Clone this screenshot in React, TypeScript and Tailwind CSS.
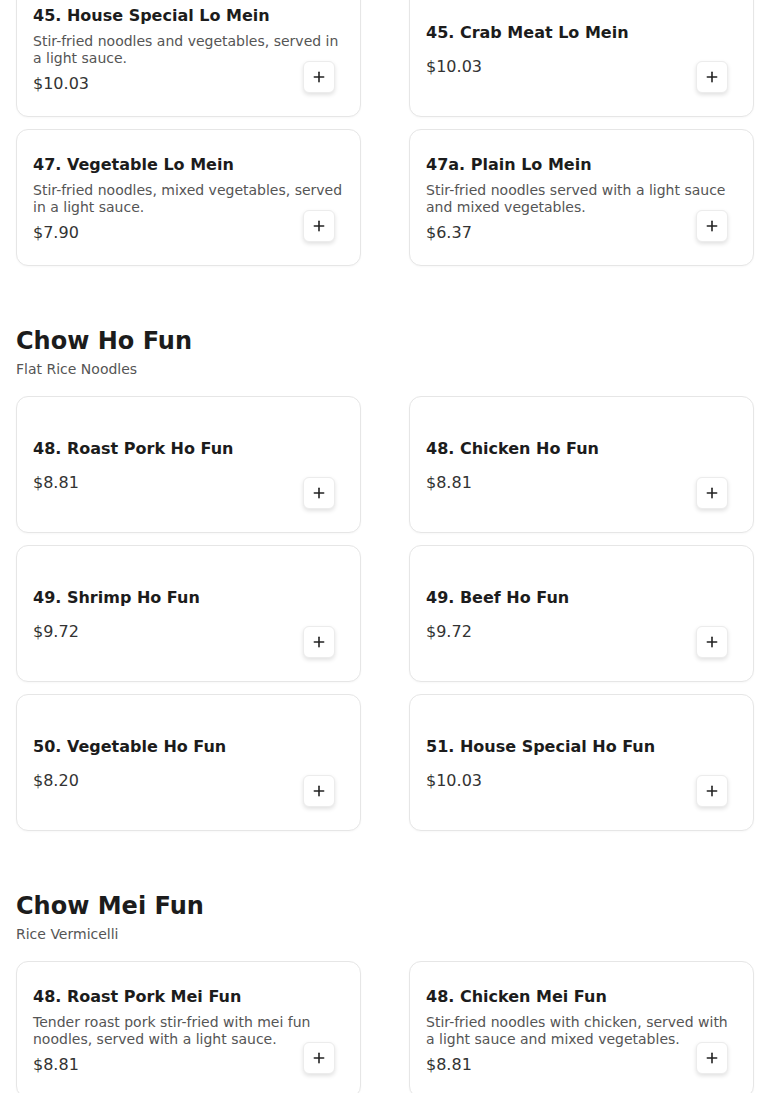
import { Plus } from 'lucide-react';

type Item = {
  name: string;
  description?: string;
  price: string;
};

type Section = {
  title?: string;
  subtitle?: string;
  items: Item[];
};

const SECTIONS: Section[] = [
  {
    items: [
      { name: '45. House Special Lo Mein', description: 'Stir-fried noodles and vegetables, served in a light sauce.', price: '$10.03' },
      { name: '45. Crab Meat Lo Mein', price: '$10.03' },
      { name: '47. Vegetable Lo Mein', description: 'Stir-fried noodles, mixed vegetables, served in a light sauce.', price: '$7.90' },
      { name: '47a. Plain Lo Mein', description: 'Stir-fried noodles served with a light sauce and mixed vegetables.', price: '$6.37' }
    ]
  },
  {
    title: 'Chow Ho Fun',
    subtitle: 'Flat Rice Noodles',
    items: [
      { name: '48. Roast Pork Ho Fun', price: '$8.81' },
      { name: '48. Chicken Ho Fun', price: '$8.81' },
      { name: '49. Shrimp Ho Fun', price: '$9.72' },
      { name: '49. Beef Ho Fun', price: '$9.72' },
      { name: '50. Vegetable Ho Fun', price: '$8.20' },
      { name: '51. House Special Ho Fun', price: '$10.03' }
    ]
  },
  {
    title: 'Chow Mei Fun',
    subtitle: 'Rice Vermicelli',
    items: [
      { name: '48. Roast Pork Mei Fun', description: 'Tender roast pork stir-fried with mei fun noodles, served with a light sauce.', price: '$8.81' },
      { name: '48. Chicken Mei Fun', description: 'Stir-fried noodles with chicken, served with a light sauce and mixed vegetables.', price: '$8.81' }
    ]
  }
];

function MenuCard({ item }: { item: Item }) {
  return (
    <div className="relative h-[137px] rounded-xl border border-[#e6e6e6] bg-white px-4 pt-[3px] flex flex-col justify-center shadow-[0_1px_2px_rgba(0,0,0,0.03)]">
      <h3 className="text-base leading-6 font-bold text-[#1c1c1c]">{item.name}</h3>
      {item.description && (
        <p className="mt-[5px] text-sm leading-[16.8px] text-[#555555]">{item.description}</p>
      )}
      <div className={`${item.description ? 'mt-[5px]' : 'mt-2.5'} text-base leading-6 text-[#333333]`}>
        {item.price}
      </div>

      {/* Add button */}
      <button className="absolute right-[25px] bottom-[23px] w-8 h-8 rounded-md border border-[#ececec] bg-white flex items-center justify-center text-[#222] shadow-[0_2px_4px_rgba(0,0,0,0.12)]">
        <Plus size={16} strokeWidth={2.4} />
      </button>
    </div>
  );
}

export default function App() {
  return (
    <div className="min-h-screen bg-white px-4 font-['DejaVu_Sans',sans-serif] overflow-hidden">
      <div className="-mt-[20px] pb-10">
        {SECTIONS.map((section, i) => (
          <section key={i} className={i > 0 ? 'mt-[59px]' : ''}>
            {section.title && (
              <div className="mb-[17px]">
                <h2 className="text-2xl leading-8 font-bold text-[#1c1c1c]">{section.title}</h2>
                <p className="mt-[2px] text-sm leading-5 text-[#555555]">{section.subtitle}</p>
              </div>
            )}
            <div className="grid grid-cols-2 gap-x-12 gap-y-3">
              {section.items.map((item) => (
                <MenuCard key={item.name} item={item} />
              ))}
            </div>
          </section>
        ))}
      </div>
    </div>
  );
}
